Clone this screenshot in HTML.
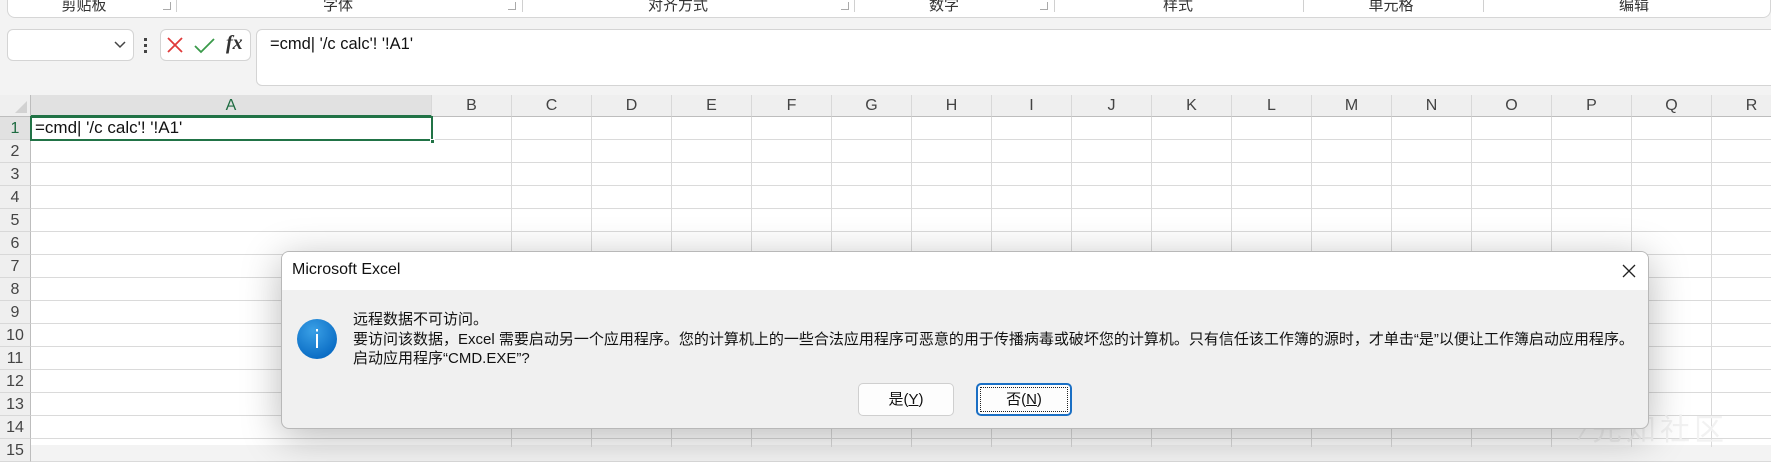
<!DOCTYPE html>
<html><head><meta charset="utf-8"><style>
*{margin:0;padding:0;box-sizing:border-box}
body{width:1771px;height:445px;overflow:hidden;background:#f3f3f3;font-family:"Liberation Sans","Noto Sans CJK SC",sans-serif;position:relative;color:#222}
.abs{position:absolute}
.rib{left:7px;top:-10px;width:1764px;height:28px;background:#fff;border:1px solid #d6d6d6;border-top:none;border-radius:0 0 8px 8px}
.gl{font-size:15px;color:#333;top:-6px;transform:translateX(-50%);white-space:nowrap}
.sep{top:0;width:1px;height:12px;background:#d0d0d0}
.lau{top:2px;width:8px;height:8px;border:1px solid #aaa;border-top:none;border-left:none}
.grid{left:0;top:95px;width:1771px;height:350px;background:#fff}
.ch{top:95px;height:22px;background:#efefef;border-bottom:1px solid #bdbdbd;border-right:1px solid #d8d8d8;font-size:16px;color:#444;text-align:center;line-height:22px}
.rn{left:0;width:31px;height:23px;background:#efefef;border-right:1px solid #bdbdbd;border-bottom:1px solid #d8d8d8;font-size:16px;color:#444;text-align:center;line-height:23px}
.hl{left:31px;width:1740px;height:1px;background:#dadada}
.vl{top:117px;width:1px;height:330px;background:#dadada}
</style></head><body>
<div class="abs rib"></div>
<div class="abs gl" style="left:84px">剪贴板</div>
<div class="abs lau" style="left:163px"></div><div class="abs sep" style="left:176px"></div>
<div class="abs gl" style="left:338px">字体</div>
<div class="abs lau" style="left:508px"></div><div class="abs sep" style="left:522px"></div>
<div class="abs gl" style="left:678px">对齐方式</div>
<div class="abs lau" style="left:841px"></div><div class="abs sep" style="left:854px"></div>
<div class="abs gl" style="left:944px">数字</div>
<div class="abs lau" style="left:1040px"></div><div class="abs sep" style="left:1054px"></div>
<div class="abs gl" style="left:1178px">样式</div>
<div class="abs sep" style="left:1303px"></div>
<div class="abs gl" style="left:1391px">单元格</div>
<div class="abs sep" style="left:1483px"></div>
<div class="abs gl" style="left:1634px">编辑</div>

<div class="abs" style="left:7px;top:29px;width:127px;height:32px;background:#fff;border:1px solid #d4d4d4;border-radius:6px"></div>
<svg class="abs" style="left:113px;top:40px" width="14" height="10"><path d="M2 2 L7 7 L12 2" fill="none" stroke="#444" stroke-width="1.5"/></svg>
<div class="abs" style="left:144px;top:38px;width:3px;height:3px;background:#444"></div>
<div class="abs" style="left:144px;top:44px;width:3px;height:3px;background:#444"></div>
<div class="abs" style="left:144px;top:50px;width:3px;height:3px;background:#444"></div>
<div class="abs" style="left:160px;top:29px;width:91px;height:32px;background:#fff;border:1px solid #d4d4d4;border-radius:6px"></div>
<svg class="abs" style="left:166px;top:36px" width="20" height="20"><path d="M2 2 L16 16 M16 2 L2 16" stroke="#e03a3a" stroke-width="1.8"/></svg>
<svg class="abs" style="left:193px;top:36px" width="24" height="20"><path d="M2 10 L8 16 L21 3" fill="none" stroke="#3a9a4a" stroke-width="1.8"/></svg>
<div class="abs" style="left:226px;top:32px;font-family:'Liberation Serif',serif;font-style:italic;font-size:20px;font-weight:bold;color:#333">fx</div>
<div class="abs" style="left:256px;top:29px;width:1530px;height:57px;background:#fff;border:1px solid #d4d4d4;border-radius:6px"></div>
<div class="abs" style="left:270px;top:35px;font-size:16.5px;color:#111">=cmd| '/c calc'! '!A1'</div>

<div class="abs grid"></div>
<div class="abs" style="left:0;top:95px;width:31px;height:22px;background:#efefef;border-right:1px solid #bdbdbd;border-bottom:1px solid #bdbdbd"></div>
<svg class="abs" style="left:12px;top:100px" width="16" height="14"><path d="M15 1 L15 13 L3 13 Z" fill="#d2d2d2"/></svg>
<div class="abs ch" style="left:31px;width:401px;background:#e1e1e1;color:#1e6b41;border-bottom:2px solid #217346">A</div>
<div id="cols"></div>
<div id="rows"></div>
<div class="abs" style="left:30px;top:116px;width:403px;height:25px;border:2px solid #217346"></div>
<div class="abs" style="left:430px;top:139px;width:5px;height:5px;background:#217346;border:1px solid #fff"></div>
<div class="abs" style="left:35px;top:118px;font-size:17px;color:#111">=cmd| '/c calc'! '!A1'</div>
<script>
var c=document.getElementById('cols'),h='';
var L='BCDEFGHIJKLMNOPQR';
for(var i=0;i<L.length;i++){var x=432+i*80;h+='<div class="abs ch" style="left:'+x+'px;width:80px">'+L[i]+'</div><div class="abs vl" style="left:'+(x+79)+'px"></div>';}
c.innerHTML=h;h='';
for(var r=1;r<=15;r++){var y=117+(r-1)*23;h+='<div class="abs rn" style="top:'+y+'px;'+(r==1?'background:#e1e1e1;color:#1e6b41':'')+'">'+r+'</div><div class="abs hl" style="top:'+(y+22)+'px"></div>';}
document.getElementById('rows').innerHTML=h;
</script>

<div class="abs" style="left:1583px;top:405px;font-size:30px;color:#f2f2f2;letter-spacing:4px">⁄先知社区</div>

<div class="abs" style="left:281px;top:251px;width:1368px;height:178px;border-radius:8px;background:#f0f0f0;border:1px solid #b8b8b8;box-shadow:0 8px 40px rgba(0,0,0,0.28);overflow:hidden">
 <div style="height:38px;background:#fff;position:relative">
  <div class="abs" style="left:10px;top:9px;font-size:16px;color:#111">Microsoft Excel</div>
  <svg class="abs" style="left:1340px;top:12px" width="14" height="14"><path d="M1 1 L13 13 M13 1 L1 13" stroke="#222" stroke-width="1.3"/></svg>
 </div>
</div>
<svg class="abs" style="left:297px;top:319px" width="40" height="40"><defs><radialGradient id="g" cx="40%" cy="30%" r="70%"><stop offset="0" stop-color="#3aa0e6"/><stop offset="1" stop-color="#0a6cc4"/></radialGradient></defs><circle cx="20" cy="20" r="20" fill="url(#g)"/><rect x="19" y="15" width="2" height="14" fill="#fff"/><rect x="19" y="10" width="2" height="2.5" fill="#fff"/></svg>
<div class="abs" style="left:353px;top:310px;font-size:15px;line-height:19.5px;color:#111;white-space:nowrap">远程数据不可访问。<br>要访问该数据，Excel 需要启动另一个应用程序。您的计算机上的一些合法应用程序可恶意的用于传播病毒或破坏您的计算机。只有信任该工作簿的源时，才单击“是”以便让工作簿启动应用程序。<br>启动应用程序“CMD.EXE”?</div>
<div class="abs" style="left:858px;top:383px;width:96px;height:33px;background:#fdfdfd;border:1px solid #cfcfcf;border-radius:5px;text-align:center;font-size:15px;line-height:31px;color:#111">是(<u>Y</u>)</div>
<div class="abs" style="left:976px;top:383px;width:96px;height:33px;background:#fdfdfd;border:2px solid #1a6fc4;border-radius:5px;text-align:center;font-size:15px;line-height:29px;color:#111"><div style="position:absolute;left:2px;top:2px;right:2px;bottom:2px;border:1px dotted #222"></div>否(<u>N</u>)</div>
</body></html>
